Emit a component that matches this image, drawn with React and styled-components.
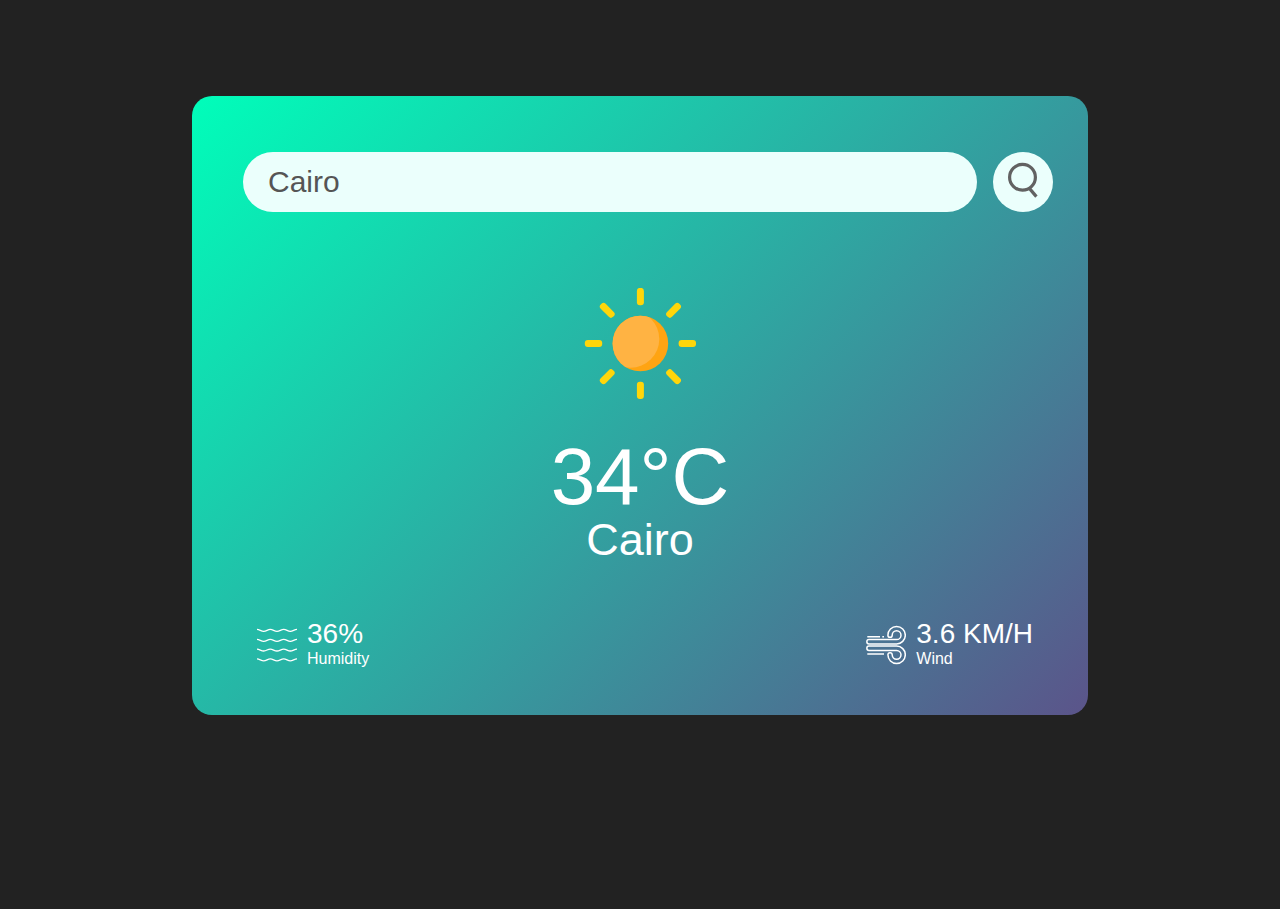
import React, { useState } from "react";
import styled, { createGlobalStyle } from "styled-components";

const GlobalStyle = createGlobalStyle`
  * { box-sizing: border-box; margin: 0; padding: 0; }
  body {
    background: #222;
    font-family: "Liberation Sans", Arial, sans-serif;
  }
`;

const Card = styled.main`
  width: 70%;
  margin: 96px auto 0;
  padding: 56px 35px 45px 51px;
  border-radius: 20px;
  background: linear-gradient(135deg, #00feba, #5b548a);
  color: #fff;
`;

const SearchForm = styled.form`
  display: flex;
  align-items: center;
  gap: 16px;
`;

const SearchInput = styled.input`
  flex: 1;
  min-width: 0;
  height: 60px;
  padding: 0 25px;
  border: 0;
  outline: 0;
  border-radius: 30px;
  background: #ebfffc;
  color: #555;
  font: 30px "Liberation Sans", Arial, sans-serif;
`;

const SearchButton = styled.button`
  display: flex;
  align-items: center;
  justify-content: center;
  flex: none;
  width: 60px;
  height: 60px;
  border: 0;
  border-radius: 50%;
  background: #ebfffc;
  color: #626262;
  cursor: pointer;
`;

const Weather = styled.section`
  display: flex;
  flex-direction: column;
  align-items: center;
  padding: 76px 16px 58px 0;
`;

const Temperature = styled.h1`
  margin-top: 37px;
  font-size: 80px;
  line-height: 80px;
  font-weight: 500;
`;

const City = styled.h2`
  font-size: 45px;
  line-height: 45px;
  font-weight: 500;
`;

const Details = styled.section`
  display: flex;
  justify-content: space-between;
  padding: 0 20px 0 14px;
`;

const Detail = styled.div`
  display: flex;
  align-items: center;
  gap: 10px;
`;

const DetailValue = styled.p`
  font-size: 28px;
  line-height: 28px;
`;

const DetailLabel = styled.p`
  font-size: 16px;
  line-height: 22px;
`;

const SearchIcon = () => (
  <svg width="30" height="40" viewBox="0 0 30 40" fill="none" stroke="currentColor" strokeWidth="3.2" aria-hidden="true">
    <circle cx="14.5" cy="15.3" r="12.9" />
    <path d="M21.6 26.6L28.4 34.6" />
  </svg>
);

const SunIcon = () => (
  <svg width="112" height="112" viewBox="0 0 112 112" role="img" aria-label="Clear sky">
    <defs>
      <clipPath id="disc">
        <circle cx="56.4" cy="55.5" r="27.8" />
      </clipPath>
    </defs>
    <g clipPath="url(#disc)">
      <rect x="28" y="27" width="57" height="57" fill="#ffa412" />
      <circle cx="46.6" cy="51" r="28.7" fill="#ffb343" />
    </g>
    {[0, 45, 90, 135, 180, 225, 270, 315].map((angle) => (
      <rect key={angle} x="52.9" y="-0.1" width="7" height="17.4" rx="3" fill="#ffd60a" transform={`rotate(${angle} 56.4 55.5)`} />
    ))}
  </svg>
);

const HumidityIcon = () => (
  <svg width="40" height="40" viewBox="0 0 40 40" fill="none" stroke="currentColor" strokeWidth="1.3" aria-hidden="true">
    {[5.3, 15.3, 25, 34.8].map((y) => (
      <path key={y} d={`M0 ${y - 0.9}C2.6 ${y - 0.9} 4 ${y + 1} 6.7 ${y + 1}S10.7 ${y - 0.9} 13.3 ${y - 0.9}S17.3 ${y + 1} 20 ${y + 1}S24 ${y - 0.9} 26.7 ${y - 0.9}S30.7 ${y + 1} 33.3 ${y + 1}S37.4 ${y - 0.9} 40 ${y - 0.9}`} />
    ))}
  </svg>
);

const gust = "M3 18.9H30.6a8.7 8.7 0 1 0-8.7-8.7a2.15 2.15 0 0 0 4.3 0a4.4 4.4 0 1 1 4.4 4.4H3a2.15 2.15 0 0 0 0 4.3z";

const WindIcon = () => (
  <svg width="40" height="40" viewBox="0 0 40 40" fill="none" stroke="currentColor" strokeWidth="1.5" aria-hidden="true">
    <path d={gust} />
    <path d={gust} transform="matrix(1 0 0 -1 0 40)" />
    <path d="M1.3 11.7H14M16.3 11.7H18M1.3 29H18" />
  </svg>
);

function WeatherDetail({ icon, value, label }) {
  return (
    <Detail>
      {icon}
      <div>
        <DetailValue>{value}</DetailValue>
        <DetailLabel>{label}</DetailLabel>
      </div>
    </Detail>
  );
}

export default function App() {
  const [query, setQuery] = useState("Cairo");

  return (
    <>
      <GlobalStyle />
      <Card>
        <SearchForm role="search" onSubmit={(event) => event.preventDefault()}>
          <SearchInput
            type="text"
            aria-label="City name"
            spellCheck={false}
            value={query}
            onChange={(event) => setQuery(event.target.value)}
          />
          <SearchButton type="submit" aria-label="Search">
            <SearchIcon />
          </SearchButton>
        </SearchForm>
        <Weather>
          <SunIcon />
          <Temperature>34°C</Temperature>
          <City>Cairo</City>
        </Weather>
        <Details>
          <WeatherDetail icon={<HumidityIcon />} value="36%" label="Humidity" />
          <WeatherDetail icon={<WindIcon />} value="3.6 KM/H" label="Wind" />
        </Details>
      </Card>
    </>
  );
}
